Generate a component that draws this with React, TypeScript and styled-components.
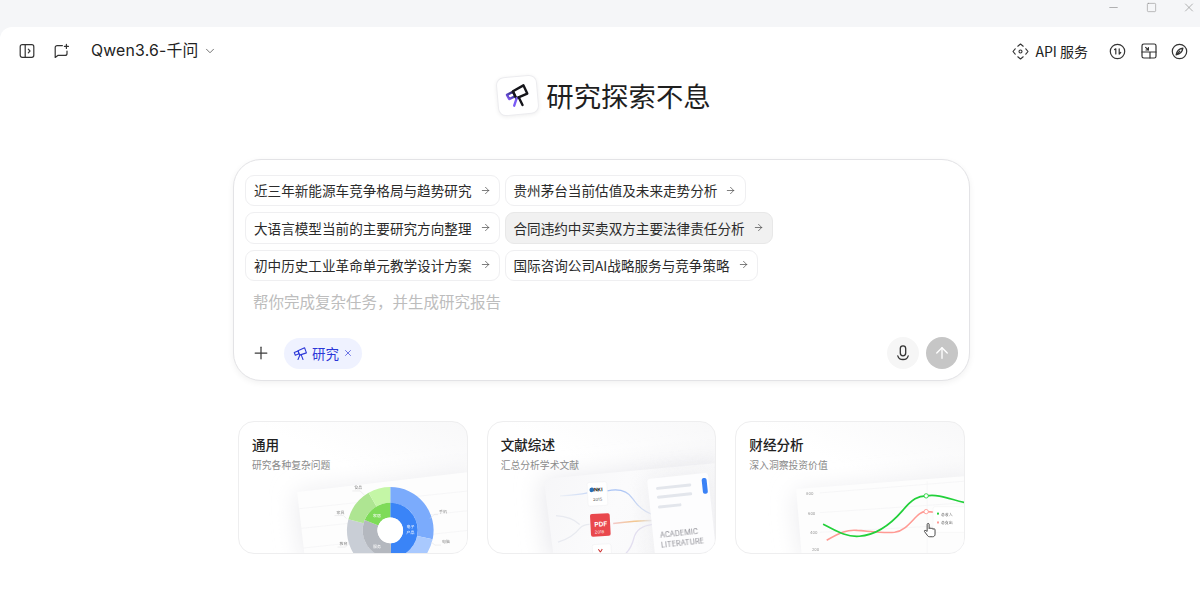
import React from "react";
import styled, { createGlobalStyle } from "styled-components";
import { ArrowRight, ArrowUp, ChevronDown, Plus, X, Minus, Square } from "lucide-react";

const FONT = `"Noto Sans CJK SC", "Noto Sans", sans-serif`;

const Global = createGlobalStyle`
  html, body { margin: 0; padding: 0; background: #f5f6f8; }
  * { box-sizing: border-box; }
  body { font-family: ${FONT}; color: #222; overflow: hidden; }
`;

const Window = styled.div`
  width: 1200px;
  height: 600px;
  display: flex;
  flex-direction: column;
  background: #f5f6f8;
  overflow: hidden;
`;
const TitleBar = styled.div`
  height: 27px;
  flex: none;
  display: flex;
  align-items: center;
  justify-content: flex-end;
  padding: 0 4px 13px 0;
  gap: 24px;
  color: #8a8a8a;
`;
const WinButton = styled.span`
  width: 14px;
  height: 14px;
  display: flex;
  align-items: center;
  justify-content: center;
`;
const Main = styled.main`
  flex: 1;
  background: #fff;
  border-top-left-radius: 12px;
  display: flex;
  flex-direction: column;
  align-items: center;
`;
const Header = styled.header`
  width: 100%;
  height: 48px;
  flex: none;
  display: flex;
  align-items: center;
  justify-content: space-between;
  padding: 0 12px 0 18px;
`;
const HeaderGroup = styled.div`
  display: flex;
  align-items: center;
`;
const IconSlot = styled.span<{ $mr?: number; $ml?: number }>`
  width: 17px;
  height: 17px;
  display: flex;
  align-items: center;
  justify-content: center;
  color: #333;
  margin-right: ${(p) => p.$mr ?? 0}px;
  margin-left: ${(p) => p.$ml ?? 0}px;
`;
const ModelName = styled.span`
  font-family: "Inter", "Noto Sans CJK SC", sans-serif;
  font-size: 15.8px;
  color: #222;
  letter-spacing: 0.2px;
  line-height: 20px;
`;
const ApiLabel = styled.span`
  font-size: 14px;
  color: #222;
  line-height: 20px;
  margin: 0 21px 0 6px;
  white-space: pre;
`;
const Hero = styled.div`
  height: 42px;
  flex: none;
  margin: -1px 0 0 8px;
  display: flex;
  align-items: center;
  gap: 8px;
`;
const LogoTile = styled.div`
  width: 41px;
  height: 39px;
  border-radius: 8px;
  background: #fff;
  border: 1px solid #ececef;
  box-shadow: 0 1px 4px rgba(0, 0, 0, 0.07);
  transform: rotate(-5deg);
  display: flex;
  align-items: center;
  justify-content: center;
`;
const HeroTitle = styled.h1`
  margin: 0;
  font-size: 27.4px;
  font-weight: 400;
  line-height: 40px;
  color: #1f1f1f;
`;
const Composer = styled.section`
  width: 737px;
  height: 222px;
  flex: none;
  margin: 43px 0 0 3px;
  border: 1px solid #e3e3e6;
  border-radius: 28px;
  box-shadow: 0 2px 6px rgba(0, 0, 0, 0.06);
  background: #fff;
  padding: 15px 11px 11px;
  display: flex;
  flex-direction: column;
`;
const ChipRows = styled.div`
  display: flex;
  flex-direction: column;
  gap: 6px;
`;
const ChipRow = styled.div`
  display: flex;
  gap: 4.5px;
`;
const Chip = styled.div<{ $active?: boolean }>`
  height: 31.4px;
  display: flex;
  align-items: center;
  gap: 8px;
  padding: 0 8.5px 1px 8px;
  border-radius: 9px;
  border: 1px solid ${(p) => (p.$active ? "#e8e8e8" : "#efeff1")};
  background: ${(p) => (p.$active ? "#f1f1f1" : "#fff")};
  font-size: 13.6px;
  line-height: 20px;
  color: #2b2b2b;
  white-space: nowrap;
  svg { color: #444; flex: none; }
`;
const Placeholder = styled.div`
  margin: 8px 0 0 8px;
  font-size: 15.5px;
  line-height: 24px;
  color: #bdbdbd;
`;
const ComposerBar = styled.div`
  margin-top: auto;
  height: 32px;
  display: flex;
  align-items: center;
`;
const PlusSlot = styled.span`
  width: 20px;
  height: 20px;
  margin-left: 6px;
  display: flex;
  align-items: center;
  justify-content: center;
  color: #3c3c3c;
`;
const ResearchPill = styled.div`
  margin-left: 13px;
  width: 78px;
  height: 31px;
  border-radius: 16px;
  background: #eff2ff;
  color: #2b37d8;
  display: flex;
  align-items: center;
  justify-content: center;
  gap: 4px;
  font-size: 13.5px;
  line-height: 20px;
`;
const BarSpacer = styled.div`
  flex: 1;
`;
const RoundButton = styled.span<{ $primary?: boolean }>`
  width: 32px;
  height: 32px;
  border-radius: 50%;
  margin-left: ${(p) => (p.$primary ? 7 : 0)}px;
  display: flex;
  align-items: center;
  justify-content: center;
  background: ${(p) => (p.$primary ? "#c6c6c6" : "#f6f6f6")};
  color: ${(p) => (p.$primary ? "#fff" : "#333")};
`;
const CardGrid = styled.div`
  width: 727px;
  flex: none;
  margin: 40px 0 0 3px;
  display: grid;
  grid-template-columns: repeat(3, 1fr);
  column-gap: 19px;
`;
const Card = styled.article`
  position: relative;
  height: 133px;
  border: 1px solid #eeeeef;
  border-radius: 16px;
  overflow: hidden;
  background: linear-gradient(205deg, #f8f8f9 0%, #ffffff 42%);
  padding: 12px 13px 0;
`;
const CardTitle = styled.h3`
  position: relative;
  z-index: 1;
  margin: 0;
  font-size: 13.6px;
  font-weight: 500;
  line-height: 20px;
  color: #222;
`;
const CardSub = styled.p`
  position: relative;
  z-index: 1;
  margin: 3px 0 0;
  font-size: 9.8px;
  line-height: 16px;
  color: #8b8b8b;
`;
const Art = styled.svg`
  position: absolute;
  left: 0;
  top: 0;
  width: 100%;
  height: 100%;
`;

function sector(cx: number, cy: number, r0: number, r1: number, a0: number, a1: number) {
  const p = (r: number, a: number) => {
    const t = ((a - 90) * Math.PI) / 180;
    return `${(cx + r * Math.cos(t)).toFixed(2)} ${(cy + r * Math.sin(t)).toFixed(2)}`;
  };
  const large = a1 - a0 > 180 ? 1 : 0;
  return `M${p(r1, a0)}A${r1} ${r1} 0 ${large} 1 ${p(r1, a1)}L${p(r0, a1)}A${r0} ${r0} 0 ${large} 0 ${p(r0, a0)}Z`;
}

const SidebarIcon = () => (
  <svg width="16" height="16" viewBox="0 0 16 16" fill="none" stroke="#333" strokeWidth="1.2" strokeLinejoin="round" strokeLinecap="round">
    <rect x="1.2" y="1.7" width="13.6" height="12.6" rx="2" />
    <path d="M6.2 2v12M9.3 6.2 11 8l-1.7 1.8" />
  </svg>
);
const NewChatIcon = () => (
  <svg width="17" height="17" viewBox="0 0 17 17" fill="none" stroke="#333" strokeWidth="1.2" strokeLinejoin="round" strokeLinecap="round">
    <path d="M9.4 2.6H4.2a2 2 0 0 0-2 2v9.8l2.6-2h7.2a2 2 0 0 0 2-2V8" />
    <path d="M13.4 1.4v4M11.4 3.4h4" />
  </svg>
);
const ApiIcon = () => (
  <svg width="17" height="17" viewBox="0 0 17 17" fill="none" stroke="#333" strokeWidth="1.1" strokeLinecap="round" strokeLinejoin="round">
    <path d="M5.8 3.2 8.5 1l2.7 2.2M13.8 5.8 16 8.5l-2.2 2.7M11.2 13.8 8.5 16l-2.7-2.2M3.2 11.2 1 8.5l2.2-2.7" />
    <circle cx="8.5" cy="8.5" r="1.5" />
  </svg>
);
const OneKIcon = () => (
  <svg width="17" height="17" viewBox="0 0 17 17" fill="none" stroke="#333" strokeWidth="1.2" strokeLinecap="round" strokeLinejoin="round">
    <circle cx="8.5" cy="8.5" r="7.2" />
    <path d="M5.6 6.6 6.8 5.8v5.2M10.2 5.8v5.2M10.2 11l1.5-1.5" />
  </svg>
);
const SplitIcon = () => (
  <svg width="16" height="16" viewBox="0 0 16 16" fill="none" stroke="#333" strokeWidth="1.2" strokeLinecap="round" strokeLinejoin="round">
    <rect x="1" y="1" width="14" height="14" rx="1.8" />
    <path d="M1 9h14M9 9v6M4.6 4.4 7.4 7M7.4 4.6V7H5" />
  </svg>
);
const CompassIcon = () => (
  <svg width="17" height="17" viewBox="0 0 17 17" fill="none" stroke="#333" strokeWidth="1.2" strokeLinecap="round" strokeLinejoin="round">
    <circle cx="8.5" cy="8.5" r="7.2" />
    <path d="M11.9 5.1c-.4 3.6-2.6 5.8-6.8 6.8.6-3.8 3-6.2 6.8-6.8ZM5.1 11.9 8.8 8.2" />
  </svg>
);
const MicIcon = () => (
  <svg width="18" height="18" viewBox="0 0 18 18" fill="none" stroke="#333" strokeWidth="1.3" strokeLinecap="round" strokeLinejoin="round">
    <rect x="6.3" y="1.8" width="5.4" height="10" rx="2.7" />
    <path d="M3.8 11.8c.6 2.3 2.6 3.7 5.2 3.7s4.6-1.4 5.2-3.7" />
  </svg>
);
const Telescope = ({ size, color, grad }: { size: number; color: string; grad?: boolean }) => (
  <svg width={size} height={size} viewBox="0 0 24 24" fill="none" stroke={color} strokeWidth={grad ? 2.3 : 1.7} strokeLinecap="round" strokeLinejoin="round">
    {grad && (
      <defs>
        <linearGradient id="tele" x1="0" y1="1" x2="1" y2="0">
          <stop offset="0" stopColor="#8a5cf6" />
          <stop offset="0.5" stopColor="#4a3fb0" />
          <stop offset="1" stopColor="#15151a" />
        </linearGradient>
      </defs>
    )}
    <path d="M2 10.5 8 8l1.7 4.5-6 2.2Z" stroke={grad ? "url(#tele)" : color} />
    <path d="M8 7.5 18.5 2.8l3 8.2-11 3.6Z" stroke={grad ? "#15151a" : color} />
    <path d="M11 14.5 8 21.5" stroke={grad ? "#7a5cf5" : color} />
    <path d="M13 13.8 16 21.5" stroke={grad ? "#15151a" : color} />
  </svg>
);

const PanelDefs = ({ id }: { id: string }) => (
  <defs>
    <linearGradient id={`${id}-p`} x1="0" y1="0" x2="1" y2="0.25">
      <stop offset="0" stopColor="#f6f6f8" />
      <stop offset="0.5" stopColor="#fbfbfc" />
      <stop offset="1" stopColor="#f8f8f9" />
    </linearGradient>
    <filter id={`${id}-s`} x="-30%" y="-30%" width="160%" height="160%">
      <feGaussianBlur stdDeviation="12" />
    </filter>
    <filter id={`${id}-t`} x="-10%" y="-10%" width="120%" height="120%">
      <feGaussianBlur stdDeviation="0.35" />
    </filter>
  </defs>
);

const DonutArt = () => {
  const c = { x: 152.5, y: 110 };
  return (
    <Art viewBox="0 0 229 133">
      <PanelDefs id="a" />
      <path d="M56 72 240 50V140H64Z" fill="#ececef" filter="url(#a-s)" />
      <path d="M58 71 240 50V140H66Z" fill="#fdfdfd" />
      <g stroke="#f3f3f5" strokeWidth="0.7">
        <path d="M60 88 232 70M62 108 232 90M64 128 232 110" />
      </g>
      <path d={sector(c.x, c.y, 28, 44, 0, 102)} fill="#7babfc" />
      <path d={sector(c.x, c.y, 28, 44, 102, 178)} fill="#a9c9fe" />
      <path d={sector(c.x, c.y, 28, 44, 178, 285)} fill="#c9ced6" />
      <path d={sector(c.x, c.y, 28, 44, 285, 330)} fill="#aee592" />
      <path d={sector(c.x, c.y, 28, 44, 330, 360)} fill="#c4f6a6" />
      <path d={sector(c.x, c.y, 13, 28, 0, 178)} fill="#3a84f7" />
      <path d={sector(c.x, c.y, 13, 28, 178, 292)} fill="#b4b8bf" />
      <path d={sector(c.x, c.y, 13, 28, 292, 360)} fill="#7edb58" />
      <circle cx={c.x} cy={c.y} r="13" fill="#fff" />
      <g filter="url(#a-t)" fontFamily={FONT} fontSize="4" fill="#fff">
        <text x="169" y="108">电子</text>
        <text x="169" y="114">产品</text>
        <text x="135" y="96">家居</text>
        <text x="135" y="128">服务</text>
      </g>
      <g filter="url(#a-t)" fontFamily={FONT} fontSize="4" fill="#888">
        <text x="116" y="68">食品</text>
        <text x="98" y="93">家具</text>
        <text x="101" y="125">教育</text>
        <text x="202" y="92">手机</text>
        <text x="205" y="123">电脑</text>
      </g>
      <path d="M114 70h8l4 4M96 95h9l3 3M99 127h8l4-4M201 94h-4l-4 4M204 125h-6l-4-3" stroke="#e4e4e6" strokeWidth="0.6" fill="none" />
    </Art>
  );
};

const MindMapArt = () => (
  <Art viewBox="0 0 229 133">
    <PanelDefs id="b" />
    <defs>
      <linearGradient id="b-blue" x1="0" x2="1"><stop offset="0" stopColor="#eef1f6" /><stop offset="0.6" stopColor="#a4c0f5" /><stop offset="1" stopColor="#dfe5f3" /></linearGradient>
      <linearGradient id="b-org" x1="0" x2="1"><stop offset="0" stopColor="#f3c9c9" /><stop offset="0.6" stopColor="#f3c68a" /><stop offset="1" stopColor="#e3e6ee" /></linearGradient>
    </defs>
    <path d="M52 58 240 36V140H60Z" fill="#eaeaee" filter="url(#b-s)" />
    <path d="M56 62Q57 58 62 57L229 42V140H66Z" fill="url(#b-p)" />
    <path d="M72 75Q90 74 100 72M120 70Q138 66 146 78T166 94" stroke="url(#b-blue)" strokeWidth="1.3" fill="none" />
    <path d="M68 95Q84 96 92 104M70 122Q84 118 92 108Q96 104 102 104" stroke="#e8eaf0" strokeWidth="1.3" fill="none" />
    <path d="M126 103Q150 100 166 100" stroke="url(#b-org)" strokeWidth="1.5" fill="none" />
    <path d="M166 104Q150 106 147 118T136 136" stroke="#e3dff0" strokeWidth="1.3" fill="none" />
    <g transform="rotate(-3 110 72)">
      <rect x="100" y="61" width="20" height="24" rx="2" fill="#fff" stroke="#f0f0f2" strokeWidth="0.5" />
      <circle cx="104.5" cy="68.5" r="2.4" fill="#2a6fb5" />
      <text x="106.5" y="70.5" fontFamily="Inter, sans-serif" fontSize="5" fontWeight="700" fill="#222">NKI</text>
      <text x="105" y="80" fontFamily="Inter, sans-serif" fontSize="4.2" fill="#555">2015</text>
    </g>
    <g transform="rotate(-3 113 105)">
      <rect x="103" y="93" width="20" height="23" rx="2" fill="#e9484d" />
      <text x="107" y="106" fontFamily="Inter, sans-serif" fontSize="6.6" fontWeight="700" fill="#fff">PDF</text>
      <text x="107" y="113" fontFamily="Inter, sans-serif" fontSize="4.2" fill="#fff">2018</text>
    </g>
    <g transform="rotate(-3 115 130)">
      <rect x="105" y="124" width="19" height="20" rx="2" fill="#fff" stroke="#f0f0f2" strokeWidth="0.5" />
      <path d="M111 129l2 3M115 129l-2 3" stroke="#c33" strokeWidth="1" fill="none" />
    </g>
    <g transform="rotate(-6 191 100)">
      <rect x="166" y="56" width="60" height="90" rx="3" fill="#e6e6ea" filter="url(#b-s)" opacity="0.7" />
      <rect x="165" y="55" width="62" height="90" rx="3" fill="#fdfdfe" />
      <rect x="173" y="64" width="36" height="3" rx="1.5" fill="#e3e6ec" />
      <rect x="173" y="73" width="36" height="3" rx="1.5" fill="#e3e6ec" />
      <rect x="173" y="83" width="24" height="3" rx="1.5" fill="#e3e6ec" />
      <rect x="220" y="60" width="5" height="16" rx="2" fill="#3b82f6" />
      <g filter="url(#b-t)" fontFamily="Inter, sans-serif" fontSize="7.4" fill="#8f8f96">
        <text x="172" y="116">ACADEMIC</text>
        <text x="172" y="126">LITERATURE</text>
      </g>
    </g>
  </Art>
);

const LineArt = () => (
  <Art viewBox="0 0 229 133">
    <PanelDefs id="c" />
    <path d="M58 72 240 52V140H66Z" fill="#ececef" filter="url(#c-s)" />
    <path d="M60 68 232 55V140H66Z" fill="#fdfdfd" />
    <g stroke="#f3f3f5" strokeWidth="0.7" fill="none">
      <path d="M84 72 232 60M84 92 232 82M84 112 232 104M193 60V135" />
    </g>
    <g filter="url(#c-t)" fontFamily="Inter, sans-serif" fontSize="4" fill="#999">
      <text x="70" y="74">800</text>
      <text x="72" y="94">600</text>
      <text x="74" y="114">400</text>
      <text x="76" y="131">200</text>
    </g>
    <path d="M91 120C105 112 112 109 122 110C135 111 148 113 160 112C175 110 182 90 192 91C198 91 205 92 214 94" fill="none" stroke="#ff9a94" strokeWidth="1.6" />
    <path d="M88 104C100 110 110 117 124 116C140 115 155 105 168 90C178 78 184 75 192 75C205 73 215 78 232 82" fill="none" stroke="#22d03a" strokeWidth="1.7" strokeLinecap="round" />
    <circle cx="192" cy="75" r="2.2" fill="#fff" stroke="#22d03a" strokeWidth="0.9" />
    <circle cx="192" cy="91" r="2.2" fill="#fff" stroke="#ff9a94" strokeWidth="0.9" />
    <rect x="199" y="86" width="36" height="26" rx="2" fill="#fff" stroke="#f2f2f3" strokeWidth="0.5" />
    <rect x="203" y="92" width="2" height="2" fill="#22d03a" />
    <rect x="203" y="101" width="2" height="2" fill="#ff9a94" />
    <g filter="url(#c-t)" fontFamily={FONT} fontSize="4" fill="#666">
      <text x="207" y="95">总收入</text>
      <text x="207" y="104">总支出</text>
    </g>
    <path d="M193 104l0 7-2-1c-1 0-1 1-.5 1.5l3 4c.5.6 1 1 2 1h3c1.5 0 2.5-1 2.5-2.5v-4.5c0-1.5-2-1.5-2-.5 0-1.5-2-1.5-2-.5 0-1-2-1.2-2-.2v-4.500c0-1-2-1.300-2 .2Z" fill="#fff" stroke="#333" strokeWidth="0.9" strokeLinejoin="round" />
  </Art>
);

const chipRows: { text: string; active?: boolean }[][] = [
  [{ text: "近三年新能源车竞争格局与趋势研究" }, { text: "贵州茅台当前估值及未来走势分析" }],
  [{ text: "大语言模型当前的主要研究方向整理" }, { text: "合同违约中买卖双方主要法律责任分析", active: true }],
  [{ text: "初中历史工业革命单元教学设计方案" }, { text: "国际咨询公司AI战略服务与竞争策略" }],
];

const cards = [
  { title: "通用", sub: "研究各种复杂问题", art: <DonutArt /> },
  { title: "文献综述", sub: "汇总分析学术文献", art: <MindMapArt /> },
  { title: "财经分析", sub: "深入洞察投资价值", art: <LineArt /> },
];

export default function App() {
  return (
    <Window>
      <Global />
      <TitleBar>
        <WinButton><Minus size={13} strokeWidth={1.2} /></WinButton>
        <WinButton><Square size={11} strokeWidth={1.2} /></WinButton>
        <WinButton><X size={15} strokeWidth={1.1} /></WinButton>
      </TitleBar>
      <Main>
        <Header>
          <HeaderGroup>
            <IconSlot $mr={18}><SidebarIcon /></IconSlot>
            <IconSlot $mr={21}><NewChatIcon /></IconSlot>
            <ModelName>Qwen3.6-千问</ModelName>
            <IconSlot $ml={3}><ChevronDown size={14} strokeWidth={1.4} color="#555" /></IconSlot>
          </HeaderGroup>
          <HeaderGroup>
            <IconSlot><ApiIcon /></IconSlot>
            <ApiLabel>API 服务</ApiLabel>
            <IconSlot $mr={14}><OneKIcon /></IconSlot>
            <IconSlot $mr={14}><SplitIcon /></IconSlot>
            <IconSlot><CompassIcon /></IconSlot>
          </HeaderGroup>
        </Header>
        <Hero>
          <LogoTile><Telescope size={25} color="#15151a" grad /></LogoTile>
          <HeroTitle>研究探索不息</HeroTitle>
        </Hero>
        <Composer>
          <ChipRows>
            {chipRows.map((row, i) => (
              <ChipRow key={i}>
                {row.map((c) => (
                  <Chip key={c.text} $active={c.active}>
                    {c.text}
                    <ArrowRight size={11} strokeWidth={1.5} />
                  </Chip>
                ))}
              </ChipRow>
            ))}
          </ChipRows>
          <Placeholder>帮你完成复杂任务，并生成研究报告</Placeholder>
          <ComposerBar>
            <PlusSlot><Plus size={22} strokeWidth={1.5} /></PlusSlot>
            <ResearchPill>
              <Telescope size={15} color="#2b37d8" />
              研究
              <X size={10} strokeWidth={1.6} />
            </ResearchPill>
            <BarSpacer />
            <RoundButton><MicIcon /></RoundButton>
            <RoundButton $primary><ArrowUp size={18} strokeWidth={1.8} /></RoundButton>
          </ComposerBar>
        </Composer>
        <CardGrid>
          {cards.map((c) => (
            <Card key={c.title}>
              {c.art}
              <CardTitle>{c.title}</CardTitle>
              <CardSub>{c.sub}</CardSub>
            </Card>
          ))}
        </CardGrid>
      </Main>
    </Window>
  );
}
